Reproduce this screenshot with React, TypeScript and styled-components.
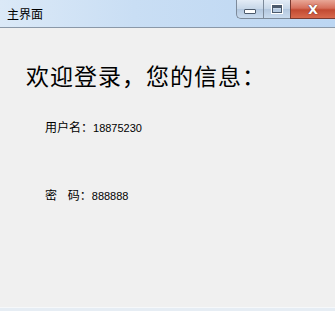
import styled, { createGlobalStyle } from "styled-components";

const GlobalStyle = createGlobalStyle`
    html, body {
        margin: 0;
        padding: 0;
        background: #f0f0f0;
    }
    body {
        font-family: "Noto Sans CJK SC", "DejaVu Sans", sans-serif;
    }
`

function App() {
    return (
        <>
            <GlobalStyle/>
            <Window>
                <TitleBar>
                    <Title>主界面</Title>
                    <Controls>
                        <CtrlButton>
                            <MinGlyph/>
                        </CtrlButton>
                        <CtrlButton>
                            <MaxGlyph/>
                        </CtrlButton>
                        <CloseButton>
                            <CloseGlyph>X</CloseGlyph>
                        </CloseButton>
                    </Controls>
                </TitleBar>
                <Body>
                    <Heading>欢迎登录，您的信息：</Heading>
                    <InfoRow $top={30}>用户名：<Value>18875230</Value></InfoRow>
                    <InfoRow $top={53}>密&nbsp;&nbsp;&nbsp;&nbsp;码：<Value>888888</Value></InfoRow>
                </Body>
                <BottomEdge/>
            </Window>
        </>
    )
}

const Window = styled.div`
    width: 335px;
    height: 311px;
    display: flex;
    flex-direction: column;
    background: #f0f0f0;
    overflow: hidden;
`

const TitleBar = styled.div`
    height: 28px;
    flex-shrink: 0;
    display: flex;
    align-items: flex-start;
    justify-content: space-between;
    background: linear-gradient(90deg, #dbe9f7 0%, #c9def4 40%, #bcd6f2 100%);
    border-bottom: 1px solid #8a98a8;
    box-sizing: border-box;
`

const Title = styled.div`
    font-size: 12px;
    color: #000;
    padding: 6px 0 0 7px;
    line-height: 16px;
`

const Controls = styled.div`
    display: flex;
    height: 19px;
`

const CtrlButton = styled.div`
    width: 27px;
    height: 19px;
    display: flex;
    align-items: center;
    justify-content: center;
    box-sizing: border-box;
    border: 1px solid #7d8a9a;
    border-top: none;
    border-right: none;
    background: linear-gradient(180deg, #e3ecf6 0%, #c6d6e8 50%, #b3c7de 51%, #c9dbee 100%);

    &:first-child {
        border-bottom-left-radius: 5px;
    }
`

const CloseButton = styled(CtrlButton)`
    width: 45px;
    border-color: #7a3a30;
    background: linear-gradient(180deg, #e8a797 0%, #d6705c 45%, #c24a32 55%, #d86a4e 100%);
`

const MinGlyph = styled.div`
    width: 10px;
    height: 3px;
    margin-top: 5px;
    background: #fff;
    border: 1px solid #4c5a6c;
    border-radius: 1px;
`

const MaxGlyph = styled.div`
    width: 8px;
    height: 6px;
    border: 1px solid #4c5a6c;
    outline: 1px solid #fff;
    background: transparent;
    box-shadow: inset 0 2px 0 #4c5a6c;
`

const CloseGlyph = styled.span`
    font-family: "DejaVu Sans", sans-serif;
    font-weight: bold;
    font-size: 13px;
    color: #fff;
    line-height: 1;
    text-shadow: 0 0 1px #6a2a20, 0 0 1px #6a2a20;
`

const Body = styled.div`
    flex: 1;
    padding: 33px 0 0 26px;
    display: flex;
    flex-direction: column;
`

const Heading = styled.h1`
    margin: 0;
    font-size: 23px;
    font-weight: normal;
    line-height: 29px;
    color: #000;
    letter-spacing: 1px;
    white-space: nowrap;
`

const InfoRow = styled.div<{ $top: number }>`
    margin-top: ${p => p.$top}px;
    margin-left: 19px;
    font-size: 12px;
    line-height: 14px;
    color: #000;
`

const Value = styled.span`
    font-family: "Liberation Sans", Arial, sans-serif;
    font-size: 11px;
`

const BottomEdge = styled.div`
    height: 3px;
    flex-shrink: 0;
    background: #e6edf4;
    border-top: 1px solid #f6f8fa;
`

export default App
